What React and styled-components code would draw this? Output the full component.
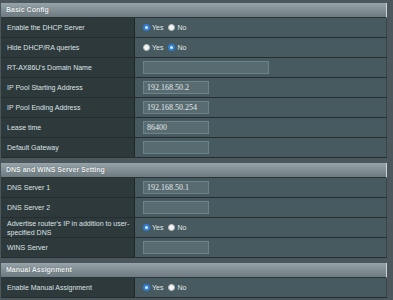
import React from 'react'
import styled, { createGlobalStyle } from 'styled-components'

const Global = createGlobalStyle`
  html, body { margin: 0; padding: 0; }
  body {
    background: #3f4b4f;
    font-family: "Liberation Sans", Arial, sans-serif;
    overflow: hidden;
  }
`

const sections = [
  {
    title: 'Basic Config',
    rows: [
      { label: 'Enable the DHCP Server', radio: 'yes' },
      { label: 'Hide DHCP/RA queries', radio: 'no' },
      { label: "RT-AX86U's Domain Name", input: '', wide: true },
      { label: 'IP Pool Starting Address', input: '192.168.50.2' },
      { label: 'IP Pool Ending Address', input: '192.168.50.254' },
      { label: 'Lease time', input: '86400' },
      { label: 'Default Gateway', input: '' },
    ],
  },
  {
    title: 'DNS and WINS Server Setting',
    rows: [
      { label: 'DNS Server 1', input: '192.168.50.1' },
      { label: 'DNS Server 2', input: '' },
      { label: "Advertise router's IP in addition to user-specified DNS", radio: 'yes' },
      { label: 'WINS Server', input: '' },
    ],
  },
  {
    title: 'Manual Assignment',
    rows: [{ label: 'Enable Manual Assignment', radio: 'yes' }],
  },
]

function Radio({ on, text }) {
  return (
    <RadioItem>
      <Dot on={on ? 1 : 0} />
      <span>{text}</span>
    </RadioItem>
  )
}

export default function App() {
  return (
    <Page>
      <Global />
      {sections.map((s) => (
        <Table key={s.title}>
          <Head>{s.title}</Head>
          {s.rows.map((r) => (
            <Row key={r.label}>
              <Label>{r.label}</Label>
              <Cell>
                {r.radio ? (
                  <>
                    <Radio on={r.radio === 'yes'} text="Yes" />
                    <Radio on={r.radio === 'no'} text="No" />
                  </>
                ) : (
                  <Field wide={r.wide ? 1 : 0}>{r.input}</Field>
                )}
              </Cell>
            </Row>
          ))}
        </Table>
      ))}
    </Page>
  )
}

const Page = styled.div`
  width: 393px;
  height: 300px;
  padding: 3px 6px 0 1px;
  box-sizing: border-box;
  background: #4b575b;
  display: flex;
  flex-direction: column;
  gap: 5px;
`

const Table = styled.div`
  width: 386px;
  display: flex;
  flex-direction: column;
`

const Head = styled.div`
  height: 14px;
  line-height: 14px;
  padding-left: 5px;
  background: linear-gradient(#96a3a8, #6d7b80);
  color: #eef2f3;
  font-weight: bold;
  font-size: 7px;
  text-shadow: 0 0 1px #3a4447;
  border-bottom: 1px solid #2a3336;
  border-right: 1px solid #c9d2d4;
`

const Row = styled.div`
  display: grid;
  grid-template-columns: 134px 1fr;
  height: 20px;
  border-bottom: 1px solid #252d30;
  box-sizing: border-box;
`

const Label = styled.div`
  background: #2e393c;
  color: #dde3e5;
  font-size: 7px;
  line-height: 9px;
  padding: 0 1px 0 6px;
  display: flex;
  align-items: center;
  border-right: 1px solid #1f2628;
`

const Cell = styled.div`
  background: #475a5f;
  display: flex;
  align-items: center;
  padding-left: 8px;
  gap: 5px;
  border-right: 1px solid #394548;
`

const Field = styled.div`
  width: ${(p) => (p.wide ? '126px' : '66px')};
  height: 13px;
  box-sizing: border-box;
  border: 1px solid #6e8388;
  background: #576b70;
  color: #e2e8ea;
  font-family: "Liberation Serif", "Times New Roman", serif;
  font-size: 8px;
  line-height: 11px;
  padding-left: 3px;
`

const RadioItem = styled.div`
  display: flex;
  align-items: center;
  gap: 2px;
  color: #e0e6e8;
  font-size: 7px;
`

const Dot = styled.span`
  width: 7px;
  height: 7px;
  border-radius: 50%;
  box-sizing: border-box;
  background: ${(p) => (p.on ? '#dce9f5' : '#f4f4f4')};
  border: ${(p) => (p.on ? '2px solid #2f7fd8' : '1px solid #b8bfc2')};
`
